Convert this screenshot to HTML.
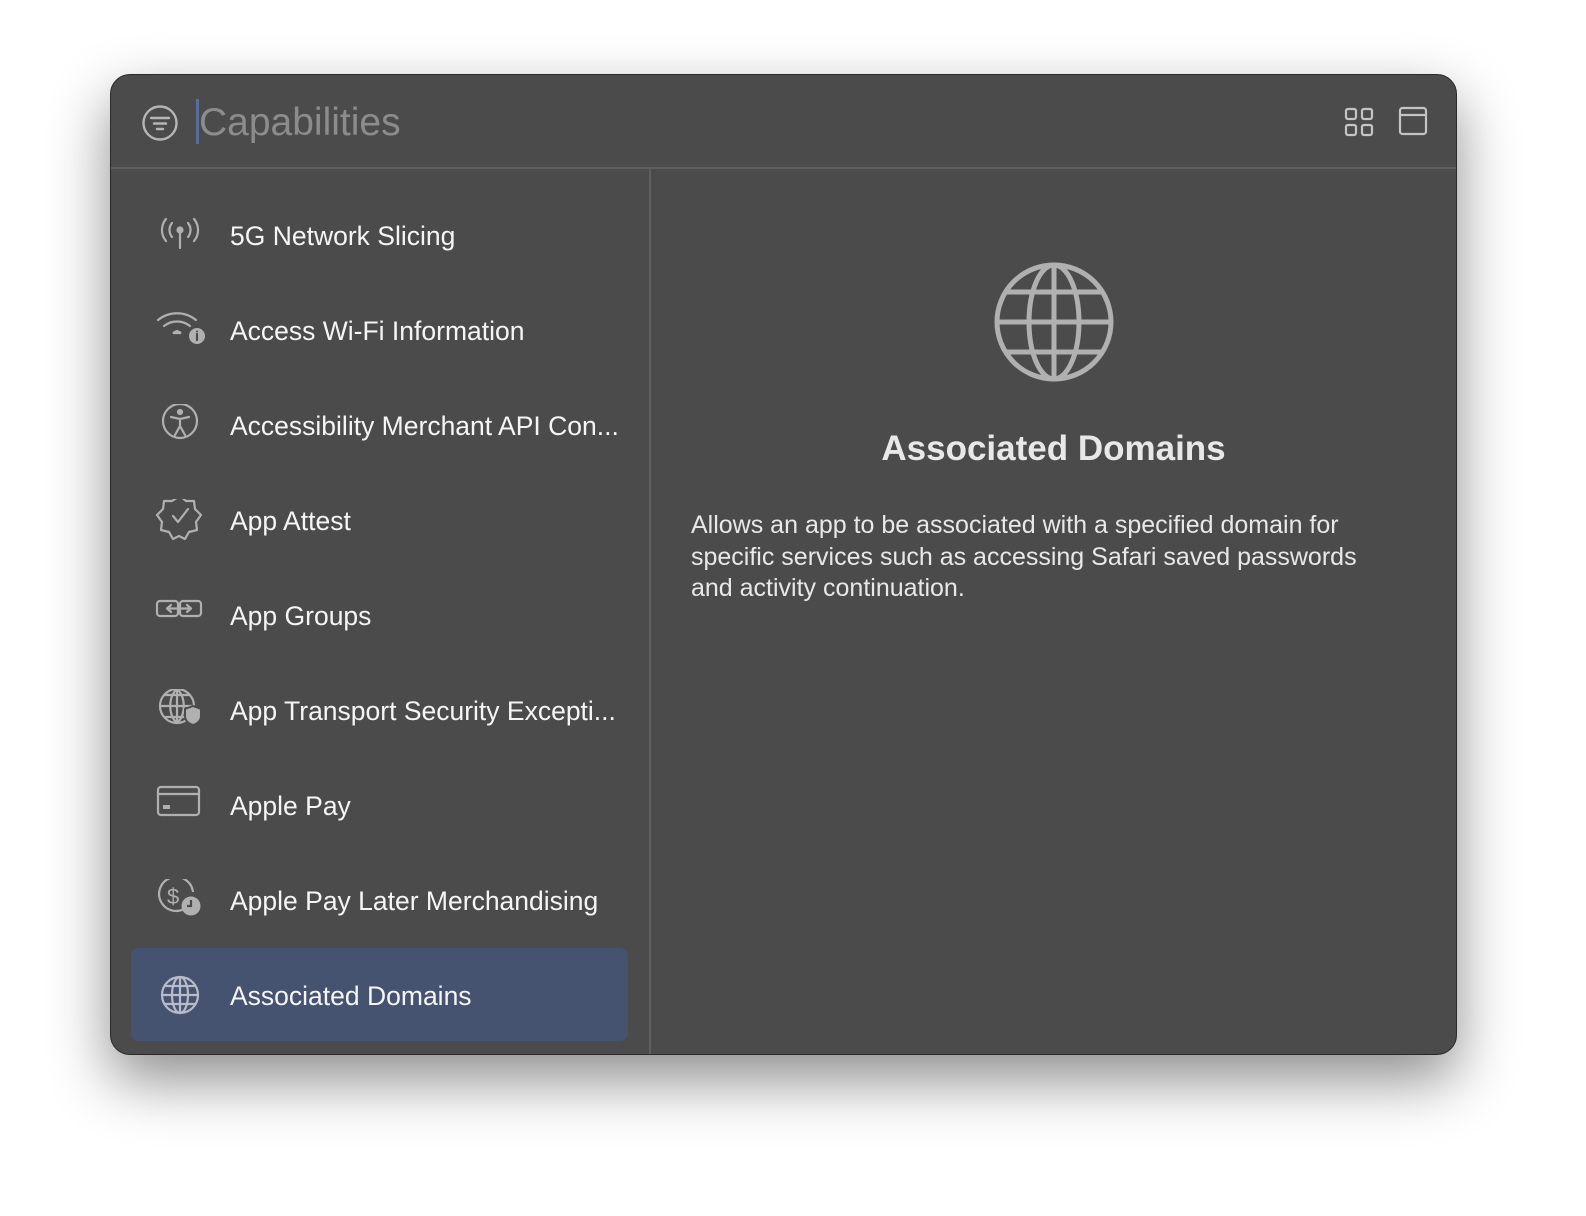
<!DOCTYPE html>
<html><head><style>
body{margin:0;width:1586px;height:1216px;background:#fff;font-family:"Liberation Sans",sans-serif;overflow:hidden}
.win{position:absolute;left:110px;top:74px;width:1345px;height:979px;background:#4b4b4b;border-radius:20px;border:1px solid #2a2a2a;box-shadow:0 25px 60px rgba(0,0,0,.45);overflow:hidden}
.hdr{position:absolute;left:0;top:0;right:0;height:92px;border-bottom:2px solid #5f5f5f}
.cap{position:absolute;left:88px;top:26px;font-size:39px;color:#8c8c8c}
.caret{position:absolute;left:85px;top:24px;width:3px;height:45px;background:#5a6c9a}
.div{position:absolute;left:538px;top:94px;bottom:0;width:2px;background:#5f5f5f}
.row{position:absolute;left:20px;width:497px;height:93px}
.row.sel{background:#465370;border-radius:8px}
.row svg{position:absolute;left:24px;top:24px}
.row span{position:absolute;left:99px;top:31px;font-size:26.5px;color:#f5f5f5}
.t{position:absolute;left:540px;right:0;top:354px;text-align:center;font-size:35px;font-weight:bold;color:#e8e8e8}
.d{position:absolute;left:580px;top:435px;width:700px;font-size:25px;line-height:31.5px;color:#e8e8e8}
</style></head><body>
<div class="win">
<div class="hdr">
<svg style="position:absolute;left:30px;top:29px" width="38" height="38" viewBox="0 0 38 38" fill="none" stroke="#b5b5b5" stroke-width="2.4" stroke-linecap="round"><circle cx="19" cy="19" r="16.5"/><path d="M10 14h18M13 19.5h12M16 25h6"/></svg>
<div class="caret"></div><div class="cap">Capabilities</div>
<svg style="position:absolute;left:1233px;top:32px" width="30" height="30" viewBox="0 0 30 30" fill="none" stroke="#c4c4c4" stroke-width="2.2"><rect x="2" y="2" width="10" height="10" rx="2"/><rect x="18" y="2" width="10" height="10" rx="2"/><rect x="2" y="18" width="10" height="10" rx="2"/><rect x="18" y="18" width="10" height="10" rx="2"/></svg>
<svg style="position:absolute;left:1287px;top:31px" width="30" height="30" viewBox="0 0 30 30" fill="none" stroke="#c4c4c4" stroke-width="2.2"><rect x="2" y="2" width="26" height="26" rx="2.5"/><path d="M2 9h26"/></svg>
</div>
<div class="div"></div>

<div class="row" style="top:115px"><svg width="50" height="50" viewBox="0 0 50 50" fill="none" stroke="#b0b0b0" stroke-width="2.2" stroke-linecap="round"><circle cx="25" cy="16" r="2.5" fill="#b0b0b0"/><path d="M25 18v16M17 9a11 11 0 0 0 0 14M33 9a11 11 0 0 1 0 14M11 5a17 17 0 0 0 0 22M39 5a17 17 0 0 1 0 22"/></svg><span>5G Network Slicing</span></div>
<div class="row" style="top:210px"><svg width="56" height="50" viewBox="0 0 56 50" fill="none" stroke="#b0b0b0" stroke-width="2.2" stroke-linecap="round"><path d="M3 11a30 30 0 0 1 38 0M9 17a21 21 0 0 1 26 0"/><path d="M18 24l4-2 4 2z" fill="#b0b0b0"/><circle cx="42" cy="27" r="8" fill="#b0b0b0" stroke="none"/><path d="M42 25v6" stroke="#4b4b4b"/><circle cx="42" cy="22.5" r="1" fill="#4b4b4b" stroke="none"/></svg><span>Access Wi-Fi Information</span></div>
<div class="row" style="top:305px"><svg width="50" height="50" viewBox="0 0 50 50" fill="none" stroke="#b0b0b0" stroke-width="2.2" stroke-linecap="round"><circle cx="25" cy="17" r="17"/><circle cx="25" cy="8" r="2" fill="#b0b0b0"/><path d="M16 13l9 2 9-2M25 15v7l-5 9M25 22l5 9"/></svg><span>Accessibility Merchant API Con...</span></div>
<div class="row" style="top:400px"><svg width="50" height="50" viewBox="0 0 50 50" fill="none" stroke="#b0b0b0" stroke-width="2.2" stroke-linejoin="round" stroke-linecap="round"><path d="M25 -3l6 5 8 0 1 8 6 6-5 7 1 8-8 2-4 7-6-3-6 3-4-7-8-2 1-8-5-7 6-6 1-8 8 0z"/><path d="M18 17l5 6 10-13"/></svg><span>App Attest</span></div>
<div class="row" style="top:495px"><svg width="50" height="50" viewBox="0 0 50 50" fill="none" stroke="#b0b0b0" stroke-width="2.2" stroke-linecap="round" stroke-linejoin="round"><rect x="2" y="7" width="21" height="15" rx="3"/><rect x="25" y="7" width="21" height="15" rx="3"/><path d="M12 14.5h24M16 11l-4 3.5 4 3.5M32 11l4 3.5-4 3.5"/></svg><span>App Groups</span></div>
<div class="row" style="top:590px"><svg width="50" height="50" viewBox="0 0 50 50" fill="none" stroke="#b0b0b0" stroke-width="2.2"><circle cx="22" cy="17" r="17"/><path d="M5 17h34M22 0v34M9 6h26M9 28h26M22 0c-9 8-9 26 0 34M22 0c9 8 9 26 0 34"/><path d="M30 20l8-3 8 3v7c0 5-4 8-8 9-4-1-8-4-8-9z" fill="#b0b0b0" stroke="#4b4b4b" stroke-width="2"/></svg><span>App Transport Security Excepti...</span></div>
<div class="row" style="top:685px"><svg width="50" height="50" viewBox="0 0 50 50" fill="none" stroke="#b0b0b0" stroke-width="2.2"><rect x="3" y="3" width="41" height="28" rx="3"/><path d="M3 10h41"/><rect x="8" y="21" width="7" height="4" fill="#b0b0b0" stroke="none"/></svg><span>Apple Pay</span></div>
<div class="row" style="top:780px"><svg width="52" height="50" viewBox="0 0 52 50" fill="none" stroke="#b0b0b0" stroke-width="2.2"><path d="M32 28A17 17 0 1 1 38 13"/><text x="12" y="25" font-size="22" fill="#b0b0b0" stroke="none" font-family="Liberation Sans">$</text><circle cx="36" cy="27" r="9.5" fill="#b0b0b0" stroke="none"/><path d="M36 21v6h-4" stroke="#4b4b4b"/></svg><span>Apple Pay Later Merchandising</span></div>
<div class="row sel" style="top:873px"><svg width="50" height="50" viewBox="0 0 50 50" fill="none" stroke="#b8bcc8" stroke-width="2.2" style="top:27px"><circle cx="25" cy="20" r="18"/><ellipse cx="25" cy="20" rx="8" ry="18"/><path d="M25 2v36M7 20h36M10 11h30M10 29h30"/></svg><span style="top:33px">Associated Domains</span></div>

<svg style="position:absolute;left:882px;top:186px" width="122" height="122" viewBox="0 0 122 122" fill="none" stroke="#b0b0b0" stroke-width="5"><circle cx="61" cy="61" r="57"/><ellipse cx="61" cy="61" rx="25" ry="57"/><path d="M61 4v114M4 61h114M14 31h94M14 91h94"/></svg>
<div class="t">Associated Domains</div>
<div class="d">Allows an app to be associated with a specified domain for specific services such as accessing Safari saved passwords and activity continuation.</div>
</div>
</body></html>
